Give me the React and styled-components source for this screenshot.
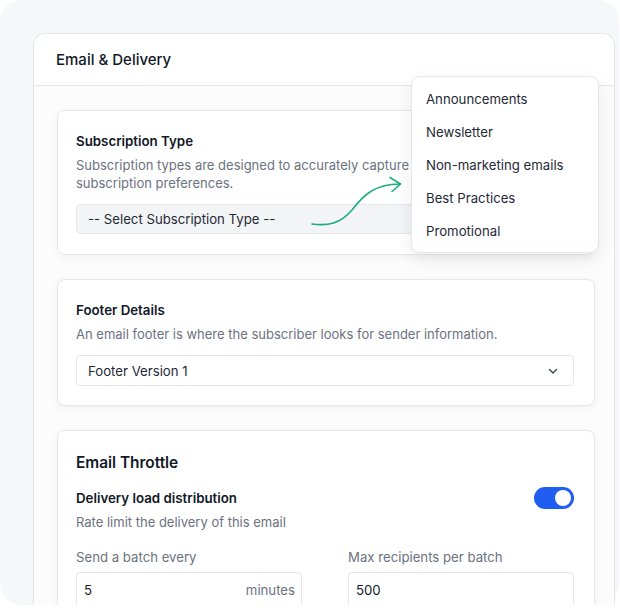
import React from 'react';
import styled, { createGlobalStyle } from 'styled-components';

const Global = createGlobalStyle`
  html, body { margin: 0; padding: 0; overflow: hidden; background: #ffffff; }
  body { font-family: Inter, "Noto Sans", sans-serif; color: #111827; -webkit-font-smoothing: antialiased; }
  * { box-sizing: border-box; }
`;

const Panel = styled.div`
  width: 619px;
  height: 605px;
  background: #f6f7f9;
  border-radius: 22px;
  padding: 33px 0 0 33px;
`;

const Card = styled.div`
  position: relative;
  width: 582px;
  background: #fcfcfc;
  border: 1px solid #e6e7ea;
  border-radius: 12px;
  box-shadow: 0 1px 3px rgba(15, 23, 42, 0.04);
`;

const Header = styled.div`
  height: 52px;
  display: flex;
  align-items: center;
  padding-left: 22px;
  background: #ffffff;
  border-bottom: 1px solid #e6e7ea;
  border-radius: 12px 12px 0 0;
  font-size: 15px;
  font-weight: 500;
  color: #111827;
`;

const Body = styled.div`
  display: flex;
  flex-direction: column;
  gap: 24px;
  padding: 24px 19px 0 23px;
`;

const Section = styled.div`
  background: #ffffff;
  border: 1px solid #e6e7ea;
  border-radius: 8px;
  box-shadow: 0 2px 8px rgba(15, 23, 42, 0.05);
  padding: ${p => p.$pad || '20px 20px 19px 18px'};
`;

const Title = styled.div`
  font-size: ${p => p.$big ? '15.4px' : '13.3px'};
  font-weight: 600;
  line-height: 20px;
  color: #111827;
`;

const Desc = styled.div`
  margin-top: ${p => p.$mt || '5px'};
  font-size: 13px;
  line-height: 18px;
  color: #6b7280;
`;

const Select = styled.div`
  margin-top: 12px;
  height: ${p => p.$h || '31px'};
  display: flex;
  align-items: center;
  justify-content: space-between;
  padding: 0 14px 0 11px;
  border: 1px solid #e5e7eb;
  border-radius: 4px;
  background: ${p => p.$muted ? '#f3f4f6' : '#ffffff'};
  font-size: 13.2px;
  color: #1f2937;
`;

const Row = styled.div`
  display: flex;
  align-items: center;
  justify-content: space-between;
  margin-top: ${p => p.$mt || '0'};
`;

const Toggle = styled.div`
  width: 40px;
  height: 22px;
  border-radius: 11px;
  background: #1f5ef0;
  display: flex;
  align-items: center;
  justify-content: flex-end;
  padding: 0 3px;
  &::after {
    content: '';
    width: 16px;
    height: 16px;
    border-radius: 50%;
    background: #ffffff;
  }
`;

const Fields = styled.div`
  display: grid;
  grid-template-columns: 226px 226px;
  column-gap: 46px;
  margin-top: 16px;
`;

const Label = styled.div`
  font-size: 13.2px;
  line-height: 20px;
  color: #6b7280;
`;

const Input = styled.div`
  margin-top: 5px;
  height: 36px;
  display: flex;
  align-items: center;
  justify-content: space-between;
  padding: 0 6px 0 7px;
  border: 1px solid #e5e7eb;
  border-radius: 4px;
  background: #ffffff;
  font-size: 13.2px;
  color: #111827;
`;

const Unit = styled.span`
  color: #6b7280;
`;

const Menu = styled.div`
  position: absolute;
  left: 377px;
  top: 42px;
  width: 188px;
  padding: 5px 0;
  background: #ffffff;
  border: 1px solid #e6e7ea;
  border-radius: 9px;
  box-shadow: 0 6px 18px rgba(15, 23, 42, 0.08);
`;

const MenuItem = styled.div`
  height: 33px;
  display: flex;
  align-items: center;
  padding-left: 14px;
  font-size: 13.2px;
  color: #1f2937;
`;

const Arrow = styled.svg`
  position: absolute;
  left: 272px;
  top: 140px;
`;

const Chevron = () => (
  <svg width="12" height="12" viewBox="0 0 12 12" fill="none">
    <path d="M2.5 4.5 6 8l3.5-3.5" stroke="#374151" strokeWidth="1.4" strokeLinecap="round" strokeLinejoin="round" />
  </svg>
);

const options = ['Announcements', 'Newsletter', 'Non-marketing emails', 'Best Practices', 'Promotional'];

export default function App() {
  return (
    <>
      <Global />
      <Panel>
        <Card>
          <Header>Email &amp; Delivery</Header>
          <Body>
            <Section $pad="20px 20px 20px 18px">
              <Title>Subscription Type</Title>
              <Desc>Subscription types are designed to accurately capture your recipients&apos;<br />subscription preferences.</Desc>
              <Select $muted $h="30px">-- Select Subscription Type --</Select>
            </Section>
            <Section>
              <Title>Footer Details</Title>
              <Desc>An email footer is where the subscriber looks for sender information.</Desc>
              <Select>
                Footer Version 1
                <Chevron />
              </Select>
            </Section>
            <Section $pad="22px 20px 60px 18px">
              <Title $big>Email Throttle</Title>
              <Row $mt="14px">
                <Title>Delivery load distribution</Title>
                <Toggle />
              </Row>
              <Desc $mt="4px">Rate limit the delivery of this email</Desc>
              <Fields>
                <div>
                  <Label>Send a batch every</Label>
                  <Input>5<Unit>minutes</Unit></Input>
                </div>
                <div>
                  <Label>Max recipients per batch</Label>
                  <Input>500</Input>
                </div>
              </Fields>
            </Section>
          </Body>
          <Arrow width="100" height="56" viewBox="0 0 100 56" fill="none">
            <path d="M6 50 C 22 52, 34 50, 46 36 C 58 20, 70 10, 94 10" stroke="#1aaf7a" strokeWidth="1.6" strokeLinecap="round" fill="none" />
            <path d="M84 3.5 L94.5 10 L86 17.5" stroke="#1aaf7a" strokeWidth="1.6" strokeLinecap="round" strokeLinejoin="round" fill="none" />
          </Arrow>
          <Menu>
            {options.map(o => <MenuItem key={o}>{o}</MenuItem>)}
          </Menu>
        </Card>
      </Panel>
    </>
  );
}
